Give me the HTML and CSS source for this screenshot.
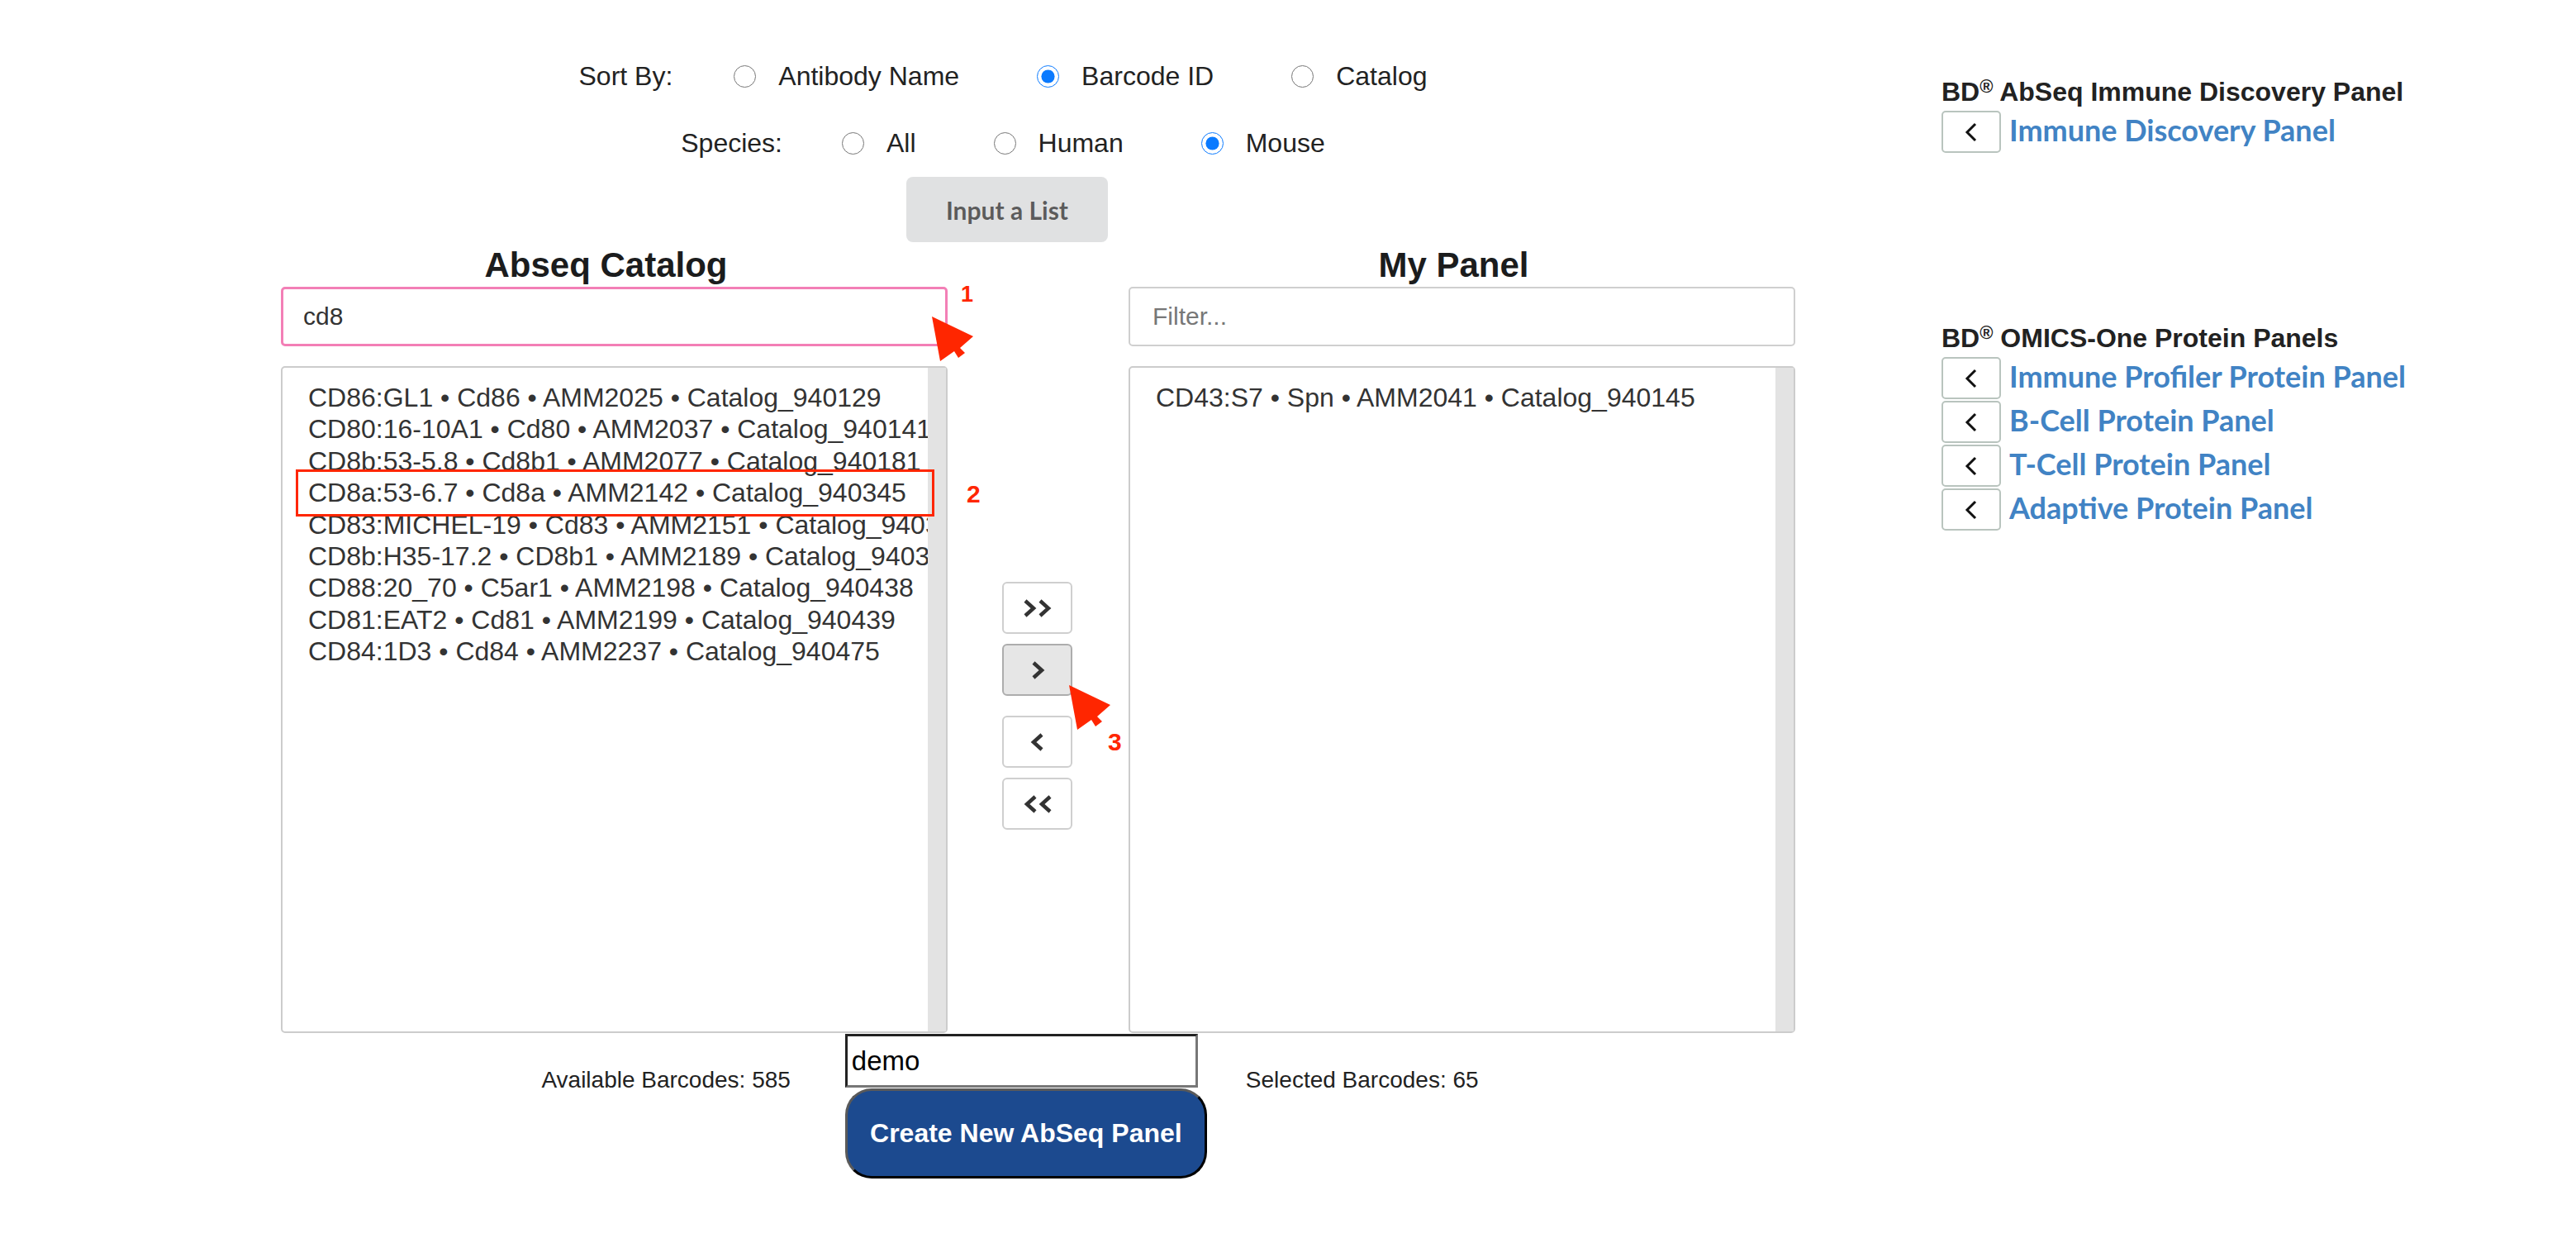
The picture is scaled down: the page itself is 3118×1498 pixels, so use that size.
FILE: index.html
```html
<!DOCTYPE html>
<html lang="en">
<head>
<meta charset="utf-8">
<title>AbSeq Panel Builder</title>
<link rel="stylesheet" href="styles.css">
</head>
<body>
<div class="page">
  <div class="main">
    <div class="ctl-row">
      <span class="row-label">Sort By:</span>
      <label class="opt"><input type="radio" name="sort"><span>Antibody Name</span></label>
      <label class="opt"><input type="radio" name="sort" checked><span>Barcode ID</span></label>
      <label class="opt"><input type="radio" name="sort"><span>Catalog</span></label>
    </div>
    <div class="ctl-row species-row">
      <span class="row-label species-label">Species:</span>
      <label class="opt"><input type="radio" name="species"><span>All</span></label>
      <label class="opt"><input type="radio" name="species"><span>Human</span></label>
      <label class="opt"><input type="radio" name="species" checked><span>Mouse</span></label>
    </div>
    <div class="btn-row">
      <button class="input-list">Input a List</button>
    </div>

    <div class="dual">
      <div class="col">
        <h2 class="col-title">Abseq Catalog</h2>
        <div class="field">
          <input class="text-input active" type="text" value="cd8">
          <span class="anno anno-1">1</span>
          <svg class="cursor cursor-1" width="52" height="56" viewBox="0 0 52 56"><polygon points="1,1 51,25 35,39 41,45 33,51 28,43 11,55" fill="#ff2600"/></svg>
        </div>
        <div class="listbox">
          <div class="items">
            <div class="item">CD86:GL1 • Cd86 • AMM2025 • Catalog_940129</div>
            <div class="item">CD80:16-10A1 • Cd80 • AMM2037 • Catalog_940141</div>
            <div class="item">CD8b:53-5.8 • Cd8b1 • AMM2077 • Catalog_940181</div>
            <div class="item">CD8a:53-6.7 • Cd8a • AMM2142 • Catalog_940345</div>
            <div class="item">CD83:MICHEL-19 • Cd83 • AMM2151 • Catalog_9403</div>
            <div class="item">CD8b:H35-17.2 • CD8b1 • AMM2189 • Catalog_9403</div>
            <div class="item">CD88:20_70 • C5ar1 • AMM2198 • Catalog_940438</div>
            <div class="item">CD81:EAT2 • Cd81 • AMM2199 • Catalog_940439</div>
            <div class="item">CD84:1D3 • Cd84 • AMM2237 • Catalog_940475</div>
          </div>
          <div class="track"></div>
          <div class="highlight"></div>
          <span class="anno anno-2">2</span>
        </div>
      </div>

      <div class="mover">
        <button class="mv-btn" aria-label="Add all">
          <svg width="36" height="24" viewBox="0 0 36 24"><path d="M3 3 L13 12 L3 21 M21 3 L31 12 L21 21" fill="none" stroke="#333" stroke-width="4.5"/></svg>
        </button>
        <button class="mv-btn pressed" aria-label="Add">
          <svg width="18" height="24" viewBox="0 0 18 24"><path d="M4 3 L14 12 L4 21" fill="none" stroke="#333" stroke-width="4.5"/></svg>
          <svg class="cursor cursor-3" width="52" height="56" viewBox="0 0 52 56"><polygon points="1,1 51,25 35,39 41,45 33,51 28,43 11,55" fill="#ff2600"/></svg>
          <span class="anno anno-3">3</span>
        </button>
        <button class="mv-btn gap-big" aria-label="Remove">
          <svg width="18" height="24" viewBox="0 0 18 24"><path d="M14 3 L4 12 L14 21" fill="none" stroke="#333" stroke-width="4.5"/></svg>
        </button>
        <button class="mv-btn" aria-label="Remove all">
          <svg width="36" height="24" viewBox="0 0 36 24"><path d="M15 3 L5 12 L15 21 M33 3 L23 12 L33 21" fill="none" stroke="#333" stroke-width="4.5"/></svg>
        </button>
      </div>

      <div class="col">
        <h2 class="col-title">My Panel</h2>
        <div class="field">
          <input class="text-input" type="text" placeholder="Filter...">
        </div>
        <div class="listbox">
          <div class="items">
            <div class="item">CD43:S7 • Spn • AMM2041 • Catalog_940145</div>
          </div>
          <div class="track"></div>
        </div>
      </div>
    </div>

    <div class="bottom">
      <span class="count">Available Barcodes: 585</span>
      <div class="create">
        <input class="name-input" type="text" value="demo">
        <button class="create-btn">Create New AbSeq Panel</button>
      </div>
      <span class="count">Selected Barcodes: 65</span>
    </div>
  </div>

  <aside class="side">
    <h3 class="side-title">BD<sup>®</sup> AbSeq Immune Discovery Panel</h3>
    <div class="prow">
      <button class="pbtn" aria-label="Load"><svg width="20" height="24" viewBox="0 0 20 24"><path d="M15 2 L5 12 L15 22" fill="none" stroke="#111" stroke-width="3"/></svg></button>
      <a class="plink" href="#">Immune Discovery Panel</a>
    </div>

    <h3 class="side-title second">BD<sup>®</sup> OMICS-One Protein Panels</h3>
    <div class="prow">
      <button class="pbtn" aria-label="Load"><svg width="20" height="24" viewBox="0 0 20 24"><path d="M15 2 L5 12 L15 22" fill="none" stroke="#111" stroke-width="3"/></svg></button>
      <a class="plink" href="#">Immune Profiler Protein Panel</a>
    </div>
    <div class="prow">
      <button class="pbtn" aria-label="Load"><svg width="20" height="24" viewBox="0 0 20 24"><path d="M15 2 L5 12 L15 22" fill="none" stroke="#111" stroke-width="3"/></svg></button>
      <a class="plink" href="#">B-Cell Protein Panel</a>
    </div>
    <div class="prow">
      <button class="pbtn" aria-label="Load"><svg width="20" height="24" viewBox="0 0 20 24"><path d="M15 2 L5 12 L15 22" fill="none" stroke="#111" stroke-width="3"/></svg></button>
      <a class="plink" href="#">T-Cell Protein Panel</a>
    </div>
    <div class="prow">
      <button class="pbtn" aria-label="Load"><svg width="20" height="24" viewBox="0 0 20 24"><path d="M15 2 L5 12 L15 22" fill="none" stroke="#111" stroke-width="3"/></svg></button>
      <a class="plink" href="#">Adaptive Protein Panel</a>
    </div>
  </aside>
</div>
</body>
</html>
```
FILE: styles.css
```css
* { box-sizing: border-box; }

body {
  margin: 0;
  background: #fff;
  color: #222;
  font-family: "Liberation Sans", Arial, sans-serif;
}

.page {
  display: flex;
  width: 3118px;
  min-height: 1498px;
}

.main {
  width: 2348px;
  flex: none;
  padding-top: 72px;
}

/* radio rows */
.ctl-row {
  display: flex;
  align-items: center;
  justify-content: center;
  height: 40px;
  padding-left: 80px;
  font-size: 32px;
  color: #222;
}

.species-row {
  margin-top: 41px;
}

.row-label {
  margin-right: 74px;
}

.species-label {
  margin-right: 72px;
}

.opt {
  display: flex;
  align-items: center;
  gap: 27px;
}

.opt + .opt {
  margin-left: 94px;
}

.opt input[type="radio"] {
  width: 27px;
  height: 27px;
  margin: 0;
  accent-color: #0a7aff;
}

.btn-row {
  display: flex;
  justify-content: center;
  padding-left: 90px;
  margin-top: 21px;
}

.input-list {
  width: 244px;
  height: 79px;
  padding: 0;
  border: 0;
  border-radius: 8px;
  background: #e0e1e2;
  color: rgba(0, 0, 0, 0.6);
  font-family: Lato, "Liberation Sans", sans-serif;
  font-weight: 700;
  font-size: 30px;
}

/* dual list */
.dual {
  display: flex;
  align-items: flex-end;
  padding-left: 340px;
  margin-top: 4px;
}

.col {
  width: 807px;
  flex: none;
  display: flex;
  flex-direction: column;
}

.col-title {
  margin: 0 0 2px;
  padding-right: 20px;
  text-align: center;
  font-size: 42px;
  line-height: 48px;
  font-weight: 700;
  color: #1b1c1d;
}

.field {
  position: relative;
  height: 72px;
}

.text-input {
  width: 100%;
  height: 72px;
  border: 2px solid #cfcfcf;
  border-radius: 5px;
  padding: 0 27px;
  font-family: "Liberation Sans", Arial, sans-serif;
  font-size: 30px;
  color: #333;
  outline: none;
  background: #fff;
}

.text-input::placeholder {
  color: #777;
}

.text-input.active {
  border: 3px solid #f37fb6;
  padding-left: 24px;
}

.listbox {
  position: relative;
  display: flex;
  height: 807px;
  margin-top: 24px;
  border: 2px solid #cccccc;
  border-radius: 5px;
}

.items {
  flex: 1;
  min-width: 0;
  overflow: hidden;
  padding: 17px 0 0 31px;
  white-space: nowrap;
  font-size: 32px;
  line-height: 38.4px;
  color: #333;
}

.track {
  width: 22px;
  flex: none;
  background: #e3e3e3;
}

.highlight {
  position: absolute;
  left: 16px;
  top: 123px;
  width: 773px;
  height: 57px;
  border: 3px solid #ff2600;
}

.anno {
  position: absolute;
  color: #ff2600;
  font-family: "Liberation Sans", Arial, sans-serif;
  font-weight: 700;
  font-size: 30px;
  line-height: 30px;
}

.anno-1 {
  left: 823px;
  top: -6px;
  font-size: 27px;
}

.anno-2 {
  left: 828px;
  top: 138px;
}

.cursor {
  position: absolute;
}

.cursor-1 {
  left: 787px;
  top: 35px;
}

/* mover buttons */
.mover {
  width: 85px;
  height: 807px;
  flex: none;
  margin: 0 68px 0 66px;
  padding-top: 15px;
  display: flex;
  flex-direction: column;
  justify-content: center;
  gap: 12px;
}

.mv-btn {
  position: relative;
  width: 85px;
  height: 63px;
  padding: 0;
  border: 2px solid #cfcfcf;
  border-radius: 6px;
  background: #fff;
  display: flex;
  align-items: center;
  justify-content: center;
}

.mv-btn.pressed {
  background: #e6e6e6;
  border-color: #adadad;
}

.mv-btn.gap-big {
  margin-top: 12px;
}

.cursor-3 {
  left: 78px;
  top: 47px;
  z-index: 2;
}

.anno-3 {
  left: 126px;
  top: 102px;
}

/* bottom */
.bottom {
  display: flex;
  justify-content: center;
  align-items: flex-start;
  padding-left: 97px;
  margin-top: 1px;
}

.count {
  padding-top: 40px;
  font-size: 28px;
  line-height: 32px;
  color: #222;
}

.create {
  display: flex;
  flex-direction: column;
  margin: 0 47px 0 66px;
}

.name-input {
  width: 427px;
  height: 65px;
  border-style: solid;
  border-width: 3px;
  border-color: #222 #777 #777 #222;
  padding: 0 5px;
  font-family: "Liberation Sans", Arial, sans-serif;
  font-size: 33px;
  color: #000;
  outline: none;
}

.create-btn {
  width: 438px;
  height: 109px;
  margin-top: 1px;
  padding: 0;
  border-style: solid;
  border-width: 3px;
  border-color: #5a5a5a #000 #000 #5a5a5a;
  border-radius: 32px;
  background: #1c4a8f;
  color: #fff;
  font-family: "Liberation Sans", Arial, sans-serif;
  font-weight: 700;
  font-size: 32px;
}

/* sidebar */
.side {
  padding-top: 91px;
  padding-left: 2px;
}

.side-title {
  margin: 0 0 3px;
  font-size: 32px;
  line-height: 40px;
  font-weight: 700;
  color: #222;
  white-space: nowrap;
}

.side-title sup {
  font-size: 22px;
  line-height: 0;
  vertical-align: 10px;
}

.side-title.second {
  margin-top: 204px;
}

.prow {
  display: flex;
  align-items: center;
  gap: 10px;
  height: 51px;
  margin-bottom: 2px;
}

.pbtn {
  width: 72px;
  height: 51px;
  flex: none;
  padding: 0;
  border: 2px solid #b9c4be;
  border-radius: 5px;
  background: #fff;
  display: flex;
  align-items: center;
  justify-content: center;
}

.plink {
  margin-top: -6px;
  font-family: Lato, "Liberation Sans", sans-serif;
  font-weight: 700;
  font-size: 36px;
  color: #4183c4;
  text-decoration: none;
  white-space: nowrap;
}
```
